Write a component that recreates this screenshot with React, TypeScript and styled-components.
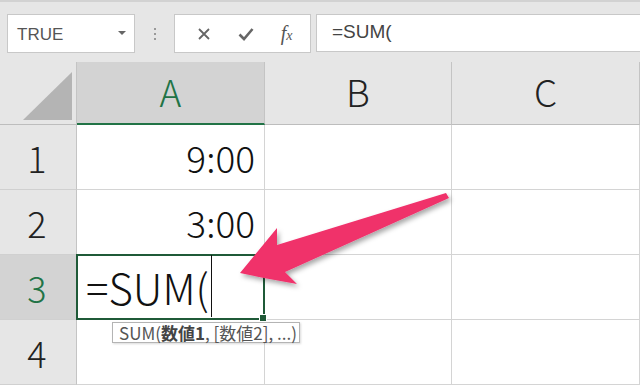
import React from "react";
import styled, { createGlobalStyle } from "styled-components";

const GlobalStyle = createGlobalStyle`
  html, body {
    margin: 0;
    padding: 0;
    background: #e6e6e6;
    overflow: hidden;
  }
  body {
    font-family: "Noto Sans CJK JP", "Noto Sans", sans-serif;
  }
`;

const Page = styled.div`
  position: relative;
  width: 640px;
  height: 385px;
  overflow: hidden;
  background: #e6e6e6;
`;

const Toolbar = styled.div`
  height: 62px;
  box-sizing: border-box;
  border-top: 2px solid #d2d2d2;
  display: flex;
  align-items: flex-start;
  padding-top: 12px;
  padding-left: 7px;
`;

const NameBox = styled.div`
  width: 128px;
  height: 39px;
  box-sizing: border-box;
  background: #fff;
  border: 1px solid #c8c8c8;
  display: flex;
  align-items: center;
  justify-content: space-between;
  padding: 2px 8px 0 9px;
  font-family: "Liberation Sans", sans-serif;
  font-size: 17px;
  color: #555;
`;

const Caret = styled.span`
  width: 0;
  height: 0;
  border-left: 4px solid transparent;
  border-right: 4px solid transparent;
  border-top: 4px solid #666;
  margin-bottom: 3px;
`;

const Grip = styled.div`
  width: 39px;
  height: 39px;
  display: flex;
  flex-direction: column;
  align-items: center;
  justify-content: center;
  gap: 3px;
  & > span {
    width: 2px;
    height: 2px;
    background: #999;
  }
`;

const ButtonBox = styled.div`
  width: 137px;
  height: 39px;
  box-sizing: border-box;
  background: #fff;
  border: 1px solid #c8c8c8;
  display: flex;
  align-items: center;
  justify-content: space-around;
  padding: 0 4px 0 8px;
  color: #666;
`;

const Fx = styled.span`
  font-family: "Liberation Serif", serif;
  font-style: italic;
  font-size: 20px;
  color: #555;
  & > small {
    font-size: 14px;
  }
`;

const FormulaBar = styled.div`
  flex: 1;
  margin-left: 5px;
  height: 38px;
  box-sizing: border-box;
  background: #fff;
  border: 1px solid #c8c8c8;
  border-right: none;
  display: flex;
  align-items: center;
  padding: 0 0 2px 15px;
  font-family: "Liberation Sans", sans-serif;
  font-size: 19px;
  color: #444;
`;

const Sheet = styled.div`
  position: relative;
  display: grid;
  grid-template-columns: 77px 188px 187px 188px;
  grid-template-rows: 63px 65px 65px 65px 65px;
  font-weight: 300;
`;

const Corner = styled.div`
  background: #e6e6e6;
  border-right: 1px solid #c4c4c4;
  border-bottom: 1px solid #bdbdbd;
  display: flex;
  align-items: flex-end;
  justify-content: flex-end;
  padding: 0 4px 4px 0;
  & > div {
    width: 49px;
    height: 48px;
    background: #b4b4b4;
    clip-path: polygon(100% 0, 100% 100%, 0 100%);
  }
`;

const ColHead = styled.div<{ $sel?: boolean }>`
  box-sizing: border-box;
  background: ${(p) => (p.$sel ? "#d3d3d3" : "#e6e6e6")};
  border-right: 1px solid #c4c4c4;
  border-bottom: ${(p) => (p.$sel ? "2px solid #217346" : "1px solid #bdbdbd")};
  display: flex;
  align-items: center;
  justify-content: center;
  font-size: 37px;
  color: ${(p) => (p.$sel ? "#217346" : "#222")};
  padding-bottom: 4px;
`;

const RowHead = styled.div<{ $sel?: boolean }>`
  box-sizing: border-box;
  background: ${(p) => (p.$sel ? "#d3d3d3" : "#e6e6e6")};
  border-right: 1px solid #c4c4c4;
  border-bottom: 1px solid #d0d0d0;
  display: flex;
  align-items: center;
  justify-content: center;
  font-size: 36px;
  color: ${(p) => (p.$sel ? "#217346" : "#222")};
  padding-right: 2px;
`;

const Cell = styled.div<{ $active?: boolean }>`
  position: relative;
  box-sizing: border-box;
  background: #fff;
  border-right: 1px solid #d4d4d4;
  border-bottom: 1px solid #d4d4d4;
  display: flex;
  align-items: center;
  justify-content: flex-end;
  padding-right: 9px;
  font-size: 37px;
  color: #111;
  ${(p) =>
    p.$active &&
    `
    border: 2px solid #1f5a38;
    margin: -1px 0 0 -1px;
    justify-content: flex-start;
    padding: 0 0 2px 8px;
    font-size: 42px;
    z-index: 2;
  `}
`;

const Caretline = styled.span`
  display: inline-block;
  width: 1px;
  height: 62px;
  background: #111;
  margin-left: 2px;
  align-self: center;
`;

const FillHandle = styled.span`
  position: absolute;
  right: -4px;
  bottom: -4px;
  width: 6px;
  height: 6px;
  background: #1f5a38;
  border: 1px solid #fff;
`;

const Tip = styled.div`
  position: absolute;
  left: 34px;
  top: 66px;
  width: 188px;
  height: 21px;
  box-sizing: border-box;
  background: #fff;
  border: 1px solid #b4b4b4;
  box-shadow: 1px 1px 2px rgba(0, 0, 0, 0.15);
  display: flex;
  align-items: center;
  padding-left: 6px;
  font-size: 17px;
  font-weight: 400;
  color: #555;
  white-space: nowrap;
  & > b {
    font-weight: 700;
    color: #444;
  }
`;

const ArrowLayer = styled.svg`
  position: absolute;
  left: 0;
  top: 0;
  pointer-events: none;
  z-index: 5;
`;

export default function App() {
  return (
    <>
      <GlobalStyle />
      <Page>
        <Toolbar>
          <NameBox>
            TRUE
            <Caret />
          </NameBox>
          <Grip>
            <span />
            <span />
            <span />
          </Grip>
          <ButtonBox>
            <svg width="14" height="14" viewBox="0 0 14 14">
              <path d="M2 2 L12 12 M12 2 L2 12" stroke="#666" strokeWidth="1.8" />
            </svg>
            <svg width="16" height="14" viewBox="0 0 16 14">
              <path d="M1.5 7.5 L6 12 L14.5 2" stroke="#666" strokeWidth="2.6" fill="none" />
            </svg>
            <Fx>
              f<small>x</small>
            </Fx>
          </ButtonBox>
          <FormulaBar>=SUM(</FormulaBar>
        </Toolbar>
        <Sheet>
          <Corner>
            <div />
          </Corner>
          <ColHead $sel>A</ColHead>
          <ColHead>B</ColHead>
          <ColHead>C</ColHead>

          <RowHead>1</RowHead>
          <Cell>9:00</Cell>
          <Cell />
          <Cell />

          <RowHead>2</RowHead>
          <Cell>3:00</Cell>
          <Cell />
          <Cell />

          <RowHead $sel>3</RowHead>
          <Cell $active>
            =SUM(
            <Caretline />
            <FillHandle />
            <Tip>
              SUM(<b>数値1</b>, [数値2], ...)
            </Tip>
          </Cell>
          <Cell />
          <Cell />

          <RowHead>4</RowHead>
          <Cell />
          <Cell />
          <Cell />
        </Sheet>
        <ArrowLayer width="640" height="385" viewBox="0 0 640 385">
          <defs>
            <filter id="sh" x="-20%" y="-20%" width="140%" height="160%">
              <feDropShadow dx="2" dy="3" stdDeviation="2.5" floodColor="#000" floodOpacity="0.35" />
            </filter>
          </defs>
          <polygon
            points="240,273 264,278 297,284 285,272 449,198 446,193 277,245 277,228"
            fill="#f0306b"
            filter="url(#sh)"
          />
        </ArrowLayer>
      </Page>
    </>
  );
}
